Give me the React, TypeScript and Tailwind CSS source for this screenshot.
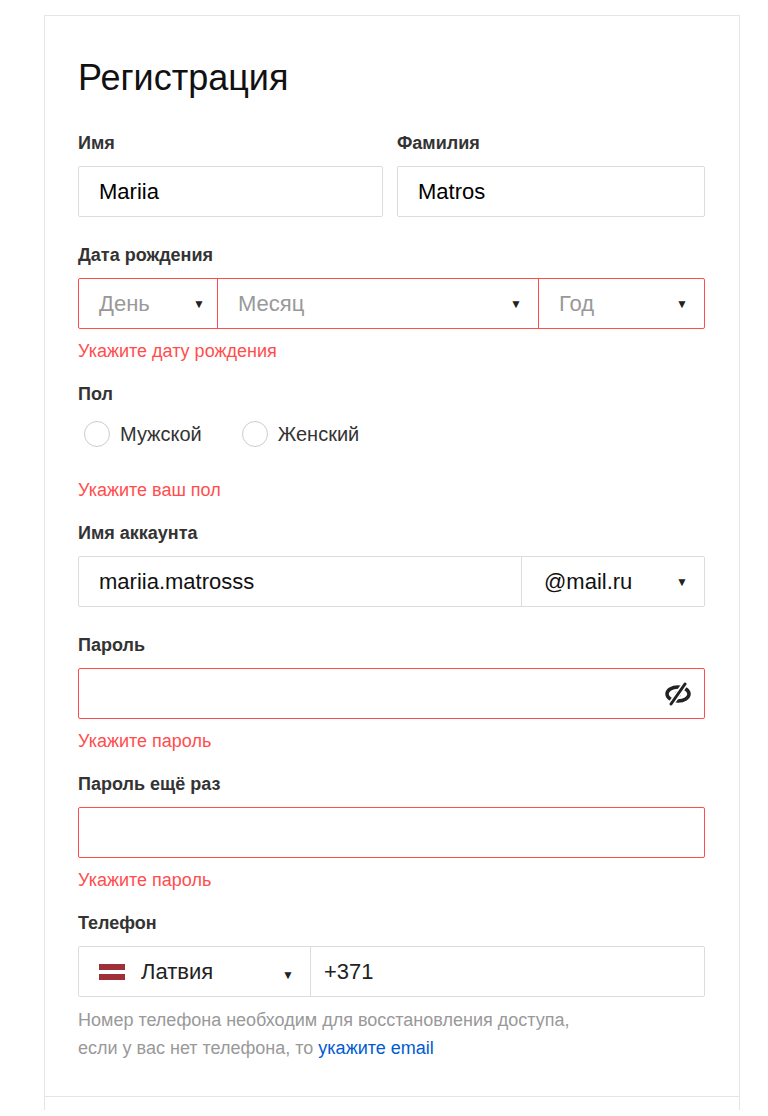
const Caret = () => <span className="text-[12px] text-[#222]">▼</span>

function Label({ children, className = '' }: { children: React.ReactNode; className?: string }) {
  return <div className={`mb-[11px] h-[24px] text-[18px] font-bold leading-[24px] text-[#333] ${className}`}>{children}</div>
}

function Err({ children, className = 'mt-[10px]' }: { children: React.ReactNode; className?: string }) {
  return <div className={`h-[24px] text-[18px] leading-[24px] text-[#ff4d4d] ${className}`}>{children}</div>
}

function EyeOff() {
  return (
    <svg width="28" height="24" viewBox="0 0 28 24">
      <ellipse cx="14" cy="12" rx="11" ry="7" fill="none" stroke="#222" strokeWidth="3.5" />
      <circle cx="14" cy="12" r="3" fill="#222" />
      <line x1="21" y1="2" x2="7" y2="22" stroke="#fff" strokeWidth="6" />
      <line x1="21" y1="2" x2="7" y2="22" stroke="#222" strokeWidth="3" strokeLinecap="round" />
    </svg>
  )
}

export default function App() {
  return (
    <div className="min-h-[1116px] bg-white [font-family:Liberation_Sans,Arial,sans-serif]">
      <div className="mx-[44px] mt-[15px] w-[696px] border-x border-t border-[#e5e5e5]">
        <div className="px-[33px] pb-[34px] pt-[40px]">
          <h1 className="h-[44px] text-[36px] leading-[44px] text-[#111]">Регистрация</h1>

          <div className="mt-[31px] grid grid-cols-[305px_308px] gap-x-[14px]">
            <div>
              <Label>Имя</Label>
              <div className="flex h-[51px] items-center rounded-[2px] border border-[#dcdcdc] px-[20px] text-[22px]">Mariia</div>
            </div>
            <div>
              <Label>Фамилия</Label>
              <div className="flex h-[51px] items-center rounded-[2px] border border-[#dcdcdc] px-[20px] text-[22px]">Matros</div>
            </div>
          </div>

          <Label className="mt-[26px]">Дата рождения</Label>
          <div className="flex h-[51px] w-[627px] rounded-[2px] border border-[#ff4d4d] text-[22px] text-[#999]">
            <div className="flex w-[139px] items-center justify-between border-r border-[#ff4d4d] pl-[20px] pr-[12px]">День <Caret /></div>
            <div className="flex w-[321px] items-center justify-between border-r border-[#ff4d4d] pl-[20px] pr-[16px]">Месяц <Caret /></div>
            <div className="flex flex-1 items-center justify-between pl-[20px] pr-[16px]">Год <Caret /></div>
          </div>
          <Err>Укажите дату рождения</Err>

          <Label className="mt-[19px]">Пол</Label>
          <div className="mt-[6px] flex h-[34px] items-center gap-[40px] pl-[6px] text-[20px] text-[#333]">
            <label className="flex items-center gap-[10px]"><span className="h-[26px] w-[26px] rounded-full border border-[#ccc]" />Мужской</label>
            <label className="flex items-center gap-[10px]"><span className="h-[26px] w-[26px] rounded-full border border-[#ccc]" />Женский</label>
          </div>
          <Err className="mt-[27px]">Укажите ваш пол</Err>

          <Label className="mt-[19px]">Имя аккаунта</Label>
          <div className="flex h-[51px] w-[627px] rounded-[2px] border border-[#dcdcdc] text-[22px] text-[#111]">
            <div className="flex w-[443px] items-center border-r border-[#dcdcdc] pl-[20px]">mariia.matrosss</div>
            <div className="flex flex-1 items-center justify-between pl-[22px] pr-[16px]">@mail.ru <Caret /></div>
          </div>

          <Label className="mt-[26px]">Пароль</Label>
          <div className="flex h-[51px] w-[627px] items-center justify-end rounded-[2px] border border-[#ff4d4d] pr-[12px]">
            <EyeOff />
          </div>
          <Err>Укажите пароль</Err>

          <Label className="mt-[19px]">Пароль ещё раз</Label>
          <div className="h-[51px] w-[627px] rounded-[2px] border border-[#ff4d4d]" />
          <Err>Укажите пароль</Err>

          <Label className="mt-[19px]">Телефон</Label>
          <div className="flex h-[51px] w-[627px] rounded-[2px] border border-[#dcdcdc] text-[22px] text-[#222]">
            <div className="flex w-[232px] items-center border-r border-[#dcdcdc] pl-[20px] pr-[16px]">
              <span className="mr-[16px] flex h-[16px] w-[26px] flex-col">
                <span className="h-[6px] bg-[#9e3039]" />
                <span className="h-[4px] bg-white" />
                <span className="h-[6px] bg-[#9e3039]" />
              </span>
              Латвия
              <span className="ml-auto"><Caret /></span>
            </div>
            <div className="flex flex-1 items-center pl-[13px]">+371</div>
          </div>
          <p className="mt-[9px] text-[18px] leading-[28px] text-[#999]">
            Номер телефона необходим для восстановления доступа,<br />
            если у вас нет телефона, то <a className="text-[#005bd1]">укажите email</a>
          </p>
        </div>
        <div className="h-[14px] border-t border-[#e5e5e5]" />
      </div>
    </div>
  )
}
